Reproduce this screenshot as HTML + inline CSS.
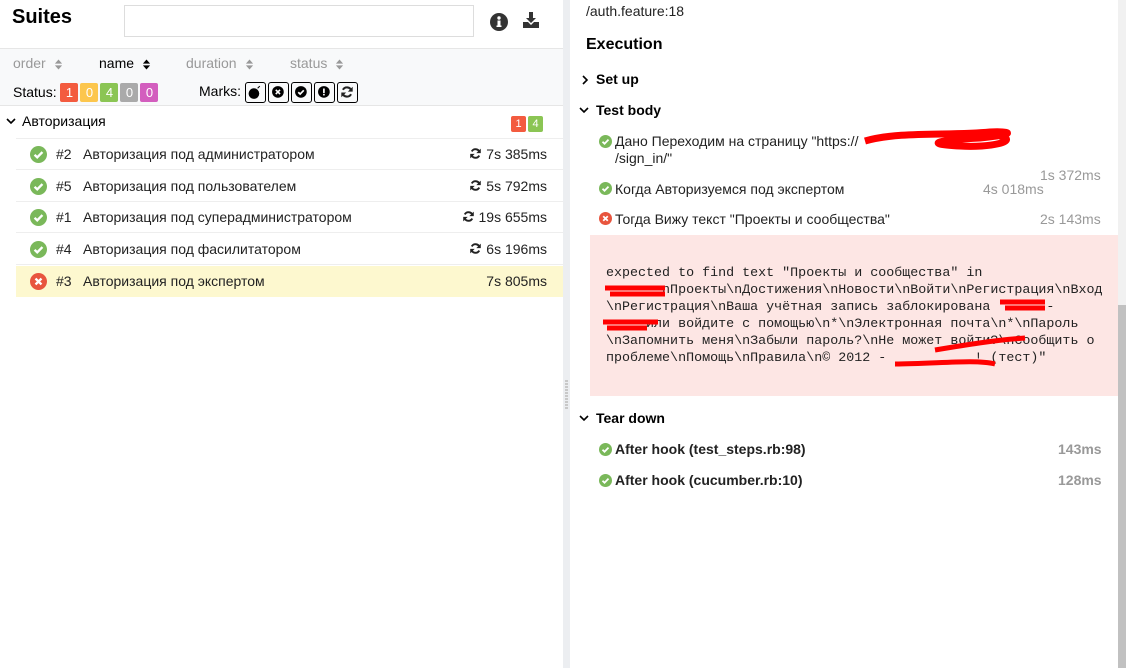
<!DOCTYPE html>
<html><head><meta charset="utf-8"><style>
*{box-sizing:border-box;margin:0;padding:0}
body{width:1126px;height:668px;overflow:hidden;background:#fff;font-family:"Liberation Sans","Noto Sans CJK SC",sans-serif;font-size:14px;color:#000;position:relative}
.abs{position:absolute}
.left{left:0;top:0;width:563px;height:668px;background:#fff}
.div{left:563px;top:0;width:7px;height:668px;background:#eceef1}
.right{left:570px;top:0;width:548px;height:668px;background:#fff}
.sb{left:1118px;top:0;width:8px;height:668px;background:#f1f1f1}
.thumb{left:1118px;top:305px;width:8px;height:363px;background:#c1c1c1}
.badge{display:inline-block;width:18px;height:19px;color:#fff;text-align:center;line-height:19px;font-size:13px;border-radius:2px;margin-right:2px}
.mark{display:inline-block;width:21px;height:21px;border:1.5px solid #000;border-radius:3px;margin-right:2px;vertical-align:middle;position:relative}
.row{position:absolute;left:16px;width:547px;height:31px;border-bottom:1px solid #eee}
.row .ic{position:absolute;left:14px;top:7px}
.row .n{position:absolute;left:40px;top:7px;font-size:14px;color:#222}
.row .t{position:absolute;left:67px;top:7px;font-size:14px;color:#222}
.row .d{position:absolute;right:16px;top:7px;font-size:14px;color:#222}
.gray{color:#999}
.mono{font-family:"Liberation Mono",monospace;font-size:13.35px;line-height:17px;color:#222;white-space:pre}
.srt{display:inline-block;vertical-align:middle;margin-left:8px}
</style></head><body>
<svg width="0" height="0" style="position:absolute"><defs>
<symbol id="ok" viewBox="0 0 16 16"><circle cx="8" cy="8" r="8" fill="#7ab85a"/><path d="M4.3 8.3l2.5 2.4 4.9-5" stroke="#fff" stroke-width="2.2" fill="none"/></symbol>
<symbol id="bad" viewBox="0 0 16 16"><circle cx="8" cy="8" r="8" fill="#e8553e"/><path d="M5.2 5.2l5.6 5.6M10.8 5.2l-5.6 5.6" stroke="#fff" stroke-width="2.2"/></symbol>
<symbol id="re" viewBox="0 0 16 16"><path d="M13 6.5A5.2 5.2 0 0 0 3.4 5.5M3 9.5a5.2 5.2 0 0 0 9.6 1" stroke="#222" stroke-width="2.4" fill="none"/><path d="M14.5 2v5.5H9z M1.5 14V8.5H7z" fill="#222"/></symbol>
<symbol id="sort" viewBox="0 0 10 14"><path d="M1 6L5 1.5 9 6zM1 8L5 12.5 9 8z"/></symbol>
<symbol id="down" viewBox="0 0 12 12"><path d="M2 4l4 4 4-4" stroke="#000" stroke-width="1.6" fill="none"/></symbol>
<symbol id="rt" viewBox="0 0 12 12"><path d="M4 2l4 4-4 4" stroke="#000" stroke-width="1.6" fill="none"/></symbol>
</defs></svg>

<div class="abs left">
  <div class="abs" style="left:12px;top:6px;font-size:20px;font-weight:bold">Suites</div>
  <div class="abs" style="left:124px;top:5px;width:350px;height:32px;border:1px solid #ddd"></div>
  <svg class="abs" style="left:490px;top:13px" width="18" height="18" viewBox="0 0 18 18"><circle cx="9" cy="9" r="9" fill="#333"/><circle cx="9" cy="5" r="1.7" fill="#fff"/><rect x="7.5" y="7.5" width="3" height="6" fill="#fff"/><rect x="6.5" y="12.5" width="5" height="1.5" fill="#fff"/></svg>
  <svg class="abs" style="left:522px;top:11px" width="18" height="18" viewBox="0 0 18 18"><path d="M7 1h4v6h3l-5 5-5-5h3z" fill="#333"/><path d="M1 11h5l3 3 3-3h5v6H1z" fill="#333"/></svg>
  <div class="abs" style="left:0;top:48px;width:563px;height:58px;background:#f8f9fa;border-top:1px solid #e6e6e6;border-bottom:1px solid #e6e6e6"></div>
  <div class="abs gray" style="left:13px;top:55px">order<svg class="srt" width="9" height="13" fill="#999"><use href="#sort"/></svg></div>
  <div class="abs" style="left:99px;top:55px">name<svg class="srt" width="9" height="13" fill="#000"><use href="#sort"/></svg></div>
  <div class="abs gray" style="left:186px;top:55px">duration<svg class="srt" width="9" height="13" fill="#999"><use href="#sort"/></svg></div>
  <div class="abs gray" style="left:290px;top:55px">status<svg class="srt" width="9" height="13" fill="#999"><use href="#sort"/></svg></div>
  <div class="abs" style="left:13px;top:82px;line-height:20px">Status: <span class="badge" style="background:#f35b3f">1</span><span class="badge" style="background:#fcc64d">0</span><span class="badge" style="background:#8bc554">4</span><span class="badge" style="background:#aaa">0</span><span class="badge" style="background:#d35ebe">0</span></div>
  <div class="abs" style="left:199px;top:81px;line-height:21px">Marks:
    <span class="mark"><svg width="18" height="18" viewBox="0 0 17 17" style="position:absolute;left:0;top:0"><circle cx="7.5" cy="10" r="5" fill="#000"/><path d="M11 5l2-2" stroke="#000"/></svg></span><span class="mark"><svg width="17" height="17" viewBox="0 0 16 16" style="position:absolute;left:2px;top:2px"><circle cx="6.5" cy="6.5" r="5.5" fill="#000"/><path d="M4.5 4.5l4 4M8.5 4.5l-4 4" stroke="#fff" stroke-width="1.5"/></svg></span><span class="mark"><svg width="17" height="17" viewBox="0 0 16 16" style="position:absolute;left:2px;top:2px"><circle cx="6.5" cy="6.5" r="5.5" fill="#000"/><path d="M4 6.8l1.8 1.7 3.4-3.5" stroke="#fff" stroke-width="1.6" fill="none"/></svg></span><span class="mark"><svg width="17" height="17" viewBox="0 0 16 16" style="position:absolute;left:2px;top:2px"><circle cx="6.5" cy="6.5" r="5.5" fill="#000"/><rect x="5.7" y="3.3" width="1.6" height="4.2" fill="#fff"/><rect x="5.7" y="8.3" width="1.6" height="1.5" fill="#fff"/></svg></span><span class="mark"><svg width="14" height="14" style="position:absolute;left:2px;top:2px"><use href="#re"/></svg></span>
  </div>
  <svg class="abs" style="left:5px;top:115px" width="12" height="12"><use href="#down"/></svg>
  <div class="abs" style="left:22px;top:113px;font-size:14px">Авторизация</div>
  <div class="abs" style="left:511px;top:114px"><span class="badge" style="background:#f35b3f;width:15px;height:16px;line-height:16px;font-size:11px">1</span><span class="badge" style="background:#8bc554;width:15px;height:16px;line-height:16px;font-size:11px">4</span></div>
  <div class="abs" style="left:16px;top:138px;width:547px;border-top:1px solid #eee"></div>

  <div class="row" style="top:139px"><svg class="ic" width="17" height="17"><use href="#ok"/></svg><span class="n">#2</span><span class="t">Авторизация под администратором</span><span class="d"><svg width="13" height="13" style="vertical-align:-1px"><use href="#re"/></svg> 7s 385ms</span></div>
  <div class="row" style="top:171px"><svg class="ic" width="17" height="17"><use href="#ok"/></svg><span class="n">#5</span><span class="t">Авторизация под пользователем</span><span class="d"><svg width="13" height="13" style="vertical-align:-1px"><use href="#re"/></svg> 5s 792ms</span></div>
  <div class="row" style="top:202px"><svg class="ic" width="17" height="17"><use href="#ok"/></svg><span class="n">#1</span><span class="t">Авторизация под суперадминистратором</span><span class="d"><svg width="13" height="13" style="vertical-align:-1px"><use href="#re"/></svg> 19s 655ms</span></div>
  <div class="row" style="top:234px"><svg class="ic" width="17" height="17"><use href="#ok"/></svg><span class="n">#4</span><span class="t">Авторизация под фасилитатором</span><span class="d"><svg width="13" height="13" style="vertical-align:-1px"><use href="#re"/></svg> 6s 196ms</span></div>
  <div class="row" style="top:266px;background:#fdf8cf;border-bottom:none"><svg class="ic" width="17" height="17"><use href="#bad"/></svg><span class="n">#3</span><span class="t">Авторизация под экспертом</span><span class="d">7s 805ms</span></div>
</div>
<div class="abs div"><div class="abs" style="left:2px;top:380px;width:3px;height:30px;background:repeating-linear-gradient(#c8c8c8 0 2px,transparent 2px 3px)"></div></div>

<div class="abs right">
  <div class="abs" style="left:16px;top:3px;font-size:14px;color:#222">/auth.feature:18</div>
  <div class="abs" style="left:16px;top:36px;font-size:16px;font-weight:bold">Execution</div>
  <svg class="abs" style="left:9px;top:74px" width="12" height="12"><use href="#rt"/></svg>
  <div class="abs" style="left:26px;top:71px;font-weight:bold">Set up</div>
  <svg class="abs" style="left:8px;top:104px" width="12" height="12"><use href="#down"/></svg>
  <div class="abs" style="left:26px;top:102px;font-weight:bold">Test body</div>
  <svg class="abs" style="left:29px;top:135px" width="13" height="13"><use href="#ok"/></svg>
  <div class="abs" style="left:45px;top:133px;color:#222;line-height:17px">Дано Переходим на страницу "https://<br>/sign_in/"</div>
  <svg class="abs" style="left:290px;top:126px" width="175" height="30"><path d="M5 15C40 5 90 10 130 6 150 5 160 8 120 12 80 14 60 18 100 20 130 22 160 15 140 10" stroke="#f00" stroke-width="7" fill="none"/></svg>
  <div class="abs gray" style="left:470px;top:167px">1s 372ms</div>
  <svg class="abs" style="left:29px;top:182px" width="13" height="13"><use href="#ok"/></svg>
  <div class="abs" style="left:45px;top:181px;color:#222">Когда Авторизуемся под экспертом</div>
  <div class="abs gray" style="left:413px;top:181px">4s 018ms</div>
  <svg class="abs" style="left:29px;top:212px" width="13" height="13"><use href="#bad"/></svg>
  <div class="abs" style="left:45px;top:211px;color:#222">Тогда Вижу текст "Проекты и сообщества"</div>
  <div class="abs gray" style="left:470px;top:211px">2s 143ms</div>
  <div class="abs" style="left:20px;top:235px;width:528px;height:161px;background:#fde6e4"></div>
  <div class="abs mono" style="left:36px;top:265px">expected to find text "Проекты и сообщества" in
       nПроекты\nДостижения\nНовости\nВойти\nРегистрация\nВход
\nРегистрация\nВаша учётная запись заблокирована       -
     или войдите с помощью\n*\nЭлектронная почта\n*\nПароль
\nЗапомнить меня\nЗабыли пароль?\nНе может войти?\nСообщить о
проблеме\nПомощь\nПравила\n© 2012 -           ! (тест)"</div>
  <svg class="abs" style="left:25px;top:280px" width="450" height="100"><path d="M10 8h60M15 14h55" stroke="#f00" stroke-width="5"/><path d="M405 22h60M410 28h50" stroke="#f00" stroke-width="5"/><path d="M8 42h55M12 48h40" stroke="#f00" stroke-width="5"/><path d="M340 70c30-5 60-10 90-12M300 84c40 0 80-5 100 0" stroke="#f00" stroke-width="5" fill="none"/></svg>
  <svg class="abs" style="left:8px;top:412px" width="12" height="12"><use href="#down"/></svg>
  <div class="abs" style="left:26px;top:410px;font-weight:bold">Tear down</div>
  <svg class="abs" style="left:29px;top:443px" width="13" height="13"><use href="#ok"/></svg>
  <div class="abs" style="left:45px;top:441px;font-weight:bold;color:#222">After hook (test_steps.rb:98)</div>
  <div class="abs gray" style="left:488px;top:441px;font-weight:bold">143ms</div>
  <svg class="abs" style="left:29px;top:474px" width="13" height="13"><use href="#ok"/></svg>
  <div class="abs" style="left:45px;top:472px;font-weight:bold;color:#222">After hook (cucumber.rb:10)</div>
  <div class="abs gray" style="left:488px;top:472px;font-weight:bold">128ms</div>
</div>
<div class="abs sb"></div><div class="abs thumb"></div>
</body></html>
